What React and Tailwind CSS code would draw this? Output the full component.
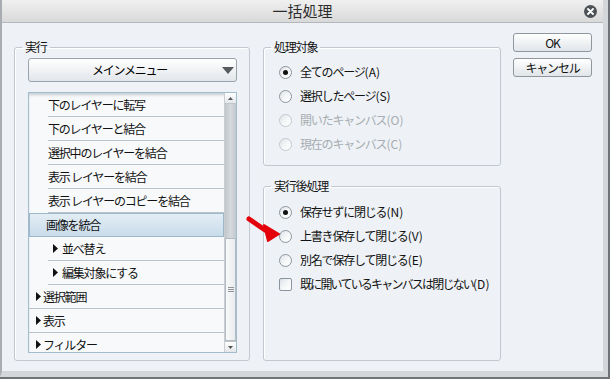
const jp = "font-['Noto_Sans_CJK_JP',sans-serif]";

function Tri() {
  return (
    <svg width="5" height="9" viewBox="0 0 5 9" className="shrink-0">
      <path d="M0 0 L5 4.5 L0 9Z" fill="#111" />
    </svg>
  );
}

function Row({ level, text, selected, expander }) {
  // level 1: category, level 2: item, level 3: nested category
  if (level === 1) {
    return (
      <div className="h-[24px] shrink-0 flex items-center border-b border-[#b9c3cb] pl-[7px]">
        <Tri />
        <span className="ml-[2px]">{text}</span>
      </div>
    );
  }
  if (selected) {
    return (
      <div className="h-[24px] shrink-0 flex items-center pl-[16px] border border-[#9db8cb] bg-gradient-to-b from-[#e3edf5] to-[#c9dcea]">
        {text}
      </div>
    );
  }
  return (
    <div className="h-[24px] shrink-0 flex">
      <div className="w-[19px] shrink-0" />
      <div className="flex-1 flex items-center border-b border-[#b9c3cb]">
        {expander ? (
          <>
            <span className="ml-[5px] flex"><Tri /></span>
            <span className="ml-[4px]">{text}</span>
          </>
        ) : (
          text
        )}
      </div>
    </div>
  );
}

function Radio({ checked, disabled }) {
  return (
    <span
      className={
        "w-[13px] h-[13px] shrink-0 rounded-full border flex items-center justify-center bg-gradient-to-br from-[#dde2e7] via-[#f4f6f8] to-white " +
        (disabled ? "border-[#c3c9ce]" : "border-[#8c959d]")
      }
    >
      {checked && <span className="w-[5px] h-[5px] rounded-full bg-[#111]" />}
    </span>
  );
}

function Option({ label, keyName, checked, disabled, box }) {
  return (
    <div className="h-[24px] flex items-center pl-[15px] whitespace-nowrap">
      {box ? (
        <span className="w-[13px] h-[13px] shrink-0 rounded-[2px] border border-[#8c959d] bg-gradient-to-br from-[#dde2e7] via-[#f4f6f8] to-white" />
      ) : (
        <Radio checked={checked} disabled={disabled} />
      )}
      <span className={"ml-[8px] " + (box ? "tracking-[-1.8px] " : "") + (disabled ? "text-[#a7acb1]" : "text-[#111]")}>
        {label}
        <span className="tracking-normal">({keyName})</span>
      </span>
    </div>
  );
}

function Group({ title, className, children }) {
  return (
    <fieldset className={"border border-[#c2c8ce] rounded-[3px] shadow-[inset_1px_1px_0_#ffffff] " + className}>
      <legend className="ml-[7px] px-[3px] leading-[16px] text-[#111]">{title}</legend>
      {children}
    </fieldset>
  );
}

function Button({ children }) {
  return (
    <div className="w-[79px] h-[19px] flex items-center justify-center rounded-[3px] border border-[#8f969d] bg-gradient-to-b from-white to-[#e1e5e9] text-[#111]">
      {children}
    </div>
  );
}

export default function App() {
  return (
    <div className={"relative w-[610px] h-[379px] bg-[#6f7377] overflow-hidden text-[12px] tracking-[-1.2px] " + jp}>
      <div className="w-[608px] h-[377px] flex flex-col bg-[#eef2f6] border-r-[5px] border-b-[6px] border-[#d4d7da] border-l-2 border-l-[#a9adb1]">
        {/* title bar */}
        <div className="relative h-[23px] shrink-0 flex items-center justify-center bg-gradient-to-b from-[#f0f0f0] to-[#d9d9d9] border-b border-[#b4b8bc]">
          <span className="text-[15px] tracking-normal text-[#2c2c2c]">一括処理</span>
          <div className="absolute right-[6px] top-[5px] w-[13px] h-[13px] rounded-full bg-[#4e5256] flex items-center justify-center">
            <svg width="7" height="7" viewBox="0 0 7 7">
              <path d="M1 1 L6 6 M6 1 L1 6" stroke="#fff" strokeWidth="1.8" strokeLinecap="round" />
            </svg>
          </div>
        </div>

        {/* body */}
        <div className="flex pl-[12px] pt-[10px]">
          <Group title="実行" className="w-[236px] h-[322px] mt-[6px]">
            <div className="pl-[13px] pr-[12px] pt-[3px] flex flex-col">
              <div className="h-[24px] flex items-center rounded-[3px] border border-[#9aa4ad] bg-gradient-to-b from-white to-[#e2e6ea]">
                <span className="flex-1 text-center pl-[8px]">メインメニュー</span>
                <svg width="12" height="7" viewBox="0 0 12 7" className="mr-[2px]">
                  <path d="M0 0 H12 L6 7Z" fill="#555a5e" />
                </svg>
              </div>
              <div className="mt-[10px] h-[261px] flex border border-[#a3bccc] bg-[#f7f9fb] shadow-[inset_0_3px_3px_-1px_#c7cdd2]">
                <div className="flex-1 flex flex-col overflow-hidden text-[#111]">
                  <Row level={2} text="下のレイヤーに転写" />
                  <Row level={2} text="下のレイヤーと結合" />
                  <Row level={2} text="選択中のレイヤーを結合" />
                  <Row level={2} text="表示 レイヤーを結合" />
                  <Row level={2} text="表示 レイヤーのコピーを結合" />
                  <Row level={2} text="画像を統合" selected />
                  <Row level={3} text="並べ替え" expander />
                  <Row level={3} text="編集対象にする" expander />
                  <Row level={1} text="選択範囲" />
                  <Row level={1} text="表示" />
                  <Row level={1} text="フィルター" />
                </div>
                {/* scrollbar */}
                <div className="w-[12px] shrink-0 flex flex-col border-l border-[#c9ced3]">
                  <div className="h-[11px] flex items-center justify-center bg-gradient-to-b from-white to-[#e4e7ea] border-b border-[#bfc5ca]">
                    <svg width="5" height="3" viewBox="0 0 5 3"><path d="M0 3 L2.5 0 L5 3Z" fill="#555" /></svg>
                  </div>
                  <div className="flex-1 bg-gradient-to-r from-[#c2c7cc] via-[#d6dadd] to-[#c2c7cc]" />
                  <div className="h-[103px] flex items-center justify-center border border-[#b4bcc3] bg-gradient-to-r from-[#f8f9fa] to-[#e9ecef]">
                    <svg width="6" height="6" viewBox="0 0 6 6">
                      <path d="M0 0.5 H6 M0 2.5 H6 M0 4.5 H6" stroke="#8d949a" strokeWidth="1" />
                    </svg>
                  </div>
                  <div className="h-[11px] flex items-center justify-center bg-gradient-to-b from-white to-[#e4e7ea] border-t border-[#bfc5ca]">
                    <svg width="5" height="3" viewBox="0 0 5 3"><path d="M0 0 L2.5 3 L5 0Z" fill="#555" /></svg>
                  </div>
                </div>
              </div>
            </div>
          </Group>

          <div className="ml-[13px] w-[238px] flex flex-col mt-[6px]">
            <Group title="処理対象" className="h-[127px]">
              <div className="pt-[5px]">
                <Option label="全てのページ" keyName="A" checked />
                <Option label="選択したページ" keyName="S" />
                <Option label="開いたキャンバス" keyName="O" disabled />
                <Option label="現在のキャンバス" keyName="C" disabled />
              </div>
            </Group>
            <Group title="実行後処理" className="h-[183px] mt-[12px]">
              <div className="pt-[6px]">
                <Option label="保存せずに閉じる" keyName="N" checked />
                <Option label="上書き保存して閉じる" keyName="V" />
                <Option label="別名で保存して閉じる" keyName="E" />
                <Option label="既に開いているキャンバスは閉じない" keyName="D" box />
              </div>
            </Group>
          </div>

          <div className="ml-[12px] flex flex-col gap-[6px]">
            <Button>OK</Button>
            <Button>キャンセル</Button>
          </div>
        </div>
      </div>

      {/* red annotation arrow */}
      <svg className="absolute left-[244px] top-[214px]" width="40" height="30" viewBox="0 0 40 30">
        <path d="M5 5 L24 18" stroke="#e3000b" strokeWidth="5" strokeLinecap="round" />
        <path d="M20 11 L35 20 L24 27Z" fill="#e3000b" stroke="#e3000b" strokeWidth="2" strokeLinejoin="round" />
      </svg>
    </div>
  );
}
